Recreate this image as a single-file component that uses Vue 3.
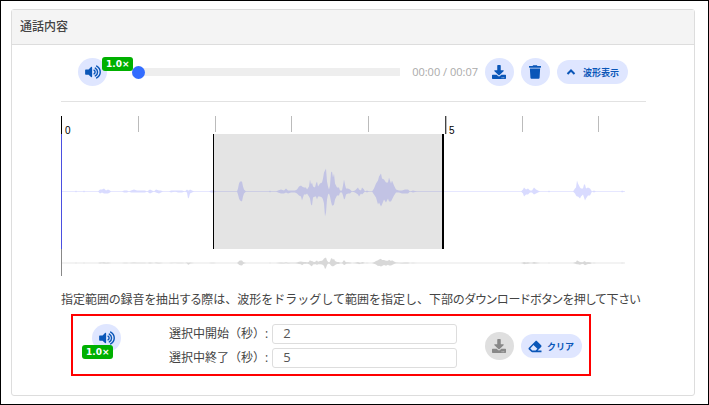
<script setup>
import { ref } from 'vue'

const position = ref(0)
const start = ref('2')
const end = ref('5')

// [x, height above the centre line, depth below it]
const samples = [
  [0, 0, 0], [14, 0, 0], [15, 1, 1], [16, 0, 0], [22, 0, 0], [23, 1, 1], [24, 0, 0],
  [37, 0, 0], [39, 2, 2], [41, 2, 1], [43, 3, 2], [45, 1, 2], [47, 2, 2], [49, 1, 1], [50, 0, 0],
  [61, 0, 0], [63, 1, 1], [66, 1, 1], [68, 0, 0], [70, 1, 1], [73, 2, 1], [76, 1, 1], [80, 1, 1], [84, 1, 1], [86, 0, 0],
  [89, 2, 2], [91, 1, 1], [93, 0, 0], [95, 2, 1], [98, 1, 2], [100, 1, 1], [102, 0, 0],
  [108, 0, 0], [110, 1, 1], [114, 1, 0], [117, 1, 1], [121, 1, 1], [124, 0, 0],
  [126, 2, 1], [127, 1, 7], [128, 1, 6], [129, 2, 2], [131, 1, 1], [133, 0, 0], [148, 0, 0], [150, 1, 1], [153, 1, 1], [155, 0, 0],
  [176, 0, 0], [177, 3, 3], [178, 8, 7], [179, 10, 9], [181, 10, 10], [182, 5, 5], [183, 2, 2], [185, 0, 0],
  [208, 0, 0], [209, 1, 1], [210, 0, 0], [215, 0, 0], [217, 1, 1], [220, 2, 2], [223, 1, 2], [225, 3, 1], [227, 1, 2],
  [230, 1, 1], [234, 1, 1], [236, 2, 2], [238, 5, 4], [240, 6, 5], [241, 5, 9], [243, 4, 3], [245, 4, 3], [246, 2, 2],
  [248, 5, 5], [249, 12, 7], [250, 7, 13], [251, 9, 14], [252, 5, 6], [254, 4, 5], [255, 8, 5], [256, 10, 8], [257, 5, 5],
  [259, 8, 5], [261, 9, 6], [262, 13, 8], [263, 19, 12], [264, 21, 25], [265, 23, 21], [266, 10, 8], [267, 5, 3], [268, 2, 2],
  [269, 6, 5], [270, 19, 10], [271, 20, 14], [272, 14, 14], [273, 18, 13], [274, 8, 8], [276, 4, 4], [278, 4, 4], [279, 1, 1],
  [281, 1, 1], [282, 6, 4], [283, 12, 8], [284, 7, 7], [285, 3, 3], [287, 3, 2], [289, 2, 2], [291, 0, 0],
  [294, 1, 1], [297, 4, 3], [298, 2, 5], [300, 1, 2], [301, 4, 3], [303, 2, 1], [304, 0, 0], [306, 1, 1], [308, 0, 0],
  [311, 0, 0], [313, 3, 3], [315, 8, 6], [317, 11, 13], [318, 15, 11], [320, 18, 15], [321, 13, 13], [323, 12, 8], [325, 9, 11],
  [327, 9, 7], [328, 14, 10], [330, 8, 10], [331, 11, 8], [333, 6, 4], [335, 2, 1], [338, 1, 1], [341, 1, 2], [344, 2, 2],
  [347, 2, 2], [349, 0, 0], [352, 1, 1], [356, 0, 0], [460, 0, 0], [462, 2, 2], [463, 4, 5], [465, 2, 3], [467, 3, 3], [469, 1, 1],
  [471, 1, 1], [473, 4, 3], [475, 2, 2], [477, 1, 1], [479, 0, 0], [487, 0, 0], [488, 1, 1], [489, 0, 0],
  [512, 0, 0], [514, 3, 2], [515, 4, 4], [516, 11, 5], [517, 8, 5], [519, 4, 7], [520, 3, 5], [522, 3, 3], [523, 7, 6],
  [524, 7, 9], [525, 3, 7], [527, 4, 4], [529, 3, 4], [531, 0, 0], [533, 1, 1], [535, 0, 0], [560, 0, 0], [561, 1, 1], [563, 0, 0]
]

// One closed shape for each stretch of sound between two silent samples
function outline(centre, gain) {
  const shapes = []
  let run = [samples[0]]
  for (const sample of samples.slice(1)) {
    run.push(sample)
    if (sample[1] === 0 && sample[2] === 0) {
      if (run.length > 2) {
        const top = run.map(([x, up]) => `${x},${centre - up * gain}`)
        const bottom = run.map(([x, , down]) => `${x},${centre + down * gain}`).reverse()
        shapes.push(`M${[...top, ...bottom].join('L')}Z`)
      }
      run = [sample]
    }
  }
  return shapes.join('')
}

const wave = outline(75.5, 1)
const overview = outline(147, 0.24)
const ticks = [77, 154, 230, 307, 461, 537]
</script>

<template>
  <main class="page">
    <svg class="defs" aria-hidden="true">
      <symbol id="volume" viewBox="0 0 576 512">
        <path d="M215 71 126 160H24c-13 0-24 11-24 24v144c0 13 11 24 24 24h102l89 89c15 15 41 4 41-17V88c0-21-26-32-41-17z" />
        <g fill="none" stroke="currentColor" stroke-width="52" stroke-linecap="round">
          <path d="M326 190c52 28 52 104 0 132" />
          <path d="M372 112c110 66 110 222 0 288" />
          <path d="M422 40c174 104 174 328 0 432" />
        </g>
      </symbol>
      <symbol id="download" viewBox="0 0 512 512">
        <path d="M216 0h80c13 0 24 11 24 24v168h88c18 0 27 21 14 34L270 378c-7 7-20 7-28 0L90 226c-12-13-3-34 15-34h87V24c0-13 11-24 24-24zm296 376v112c0 13-11 24-24 24H24c-13 0-24-11-24-24V376c0-13 11-24 24-24h147l49 49c20 20 52 20 72 0l49-49h147c13 0 24 11 24 24zM388 464c0-11-9-20-20-20s-20 9-20 20 9 20 20 20 20-9 20-20zm64 0c0-11-9-20-20-20s-20 9-20 20 9 20 20 20 20-9 20-20z" />
      </symbol>
      <symbol id="trash" viewBox="0 0 448 512">
        <path d="M432 32H312l-9-19c-4-8-12-13-22-13H167c-9 0-18 5-22 13l-9 19H16C7 32 0 39 0 48v32c0 9 7 16 16 16h416c9 0 16-7 16-16V48c0-9-7-16-16-16zM32 128l21 339c2 25 23 45 48 45h246c25 0 46-20 48-45l21-339z" />
      </symbol>
      <symbol id="chevron" viewBox="0 0 10 8">
        <path d="M1.5 6 5 2.5 8.5 6" fill="none" stroke="currentColor" stroke-width="2" />
      </symbol>
      <symbol id="eraser" viewBox="0 0 512 512">
        <path d="M498 274c19-19 19-49 0-68L338 46c-19-19-49-19-68 0L14 302c-19 19-19 49 0 68l96 96c9 9 21 14 34 14h356c7 0 12-5 12-12v-40c0-7-5-12-12-12H356zM195 195l154 154-67 67H150l-80-80z" />
      </symbol>
    </svg>

    <section class="card">
      <h1 class="card-header">通話内容</h1>
      <div class="card-body">
        <div class="player">
          <button class="round" type="button" aria-label="再生">
            <svg class="icon-volume"><use href="#volume" /></svg>
            <span class="badge badge-top">1.0×</span>
          </button>
          <input v-model="position" class="seek" type="range" min="0" max="7" aria-label="再生位置" />
          <span class="time">00:00 / 00:07</span>
          <div class="actions">
            <button class="round" type="button" aria-label="ダウンロード">
              <svg class="icon-download"><use href="#download" /></svg>
            </button>
            <button class="round" type="button" aria-label="削除">
              <svg class="icon-trash"><use href="#trash" /></svg>
            </button>
            <button class="pill" type="button">
              <svg class="icon-chevron"><use href="#chevron" /></svg>波形表示
            </button>
          </div>
        </div>

        <svg class="waveform" viewBox="0 0 585 160" role="img" aria-label="波形">
          <rect v-for="x in ticks" :key="x" :x="x" y="0" width="1" height="16" fill="#bbb" />
          <rect x="384" y="0" width="1" height="18" fill="#444" />
          <rect x="385" y="0" width="1" height="18" fill="#bbb" />
          <text class="tick-label" x="4" y="18">0</text>
          <text class="tick-label" x="388" y="18">5</text>
          <rect x="0" y="75" width="564" height="1" fill="#e6e7ff" />
          <path :d="wave" fill="#d9dbff" />
          <rect x="0" y="146" width="564" height="2" fill="#f3f3f3" />
          <path :d="overview" fill="#d8d8d8" />
          <rect x="152" y="18" width="231" height="115" fill="#000" fill-opacity="0.106" />
          <rect x="152" y="18" width="1" height="115" />
          <rect x="381" y="18" width="2" height="115" />
          <rect x="0" y="0" width="1" height="18" />
          <rect x="0" y="18" width="1" height="115" fill="#4b4fe0" />
          <rect x="0" y="133" width="1" height="27" fill="#888" />
        </svg>

        <p class="hint">
          <span class="compact">指定範囲の録音を抽出する際は</span>、波形をドラッグして範囲を指定し、<span class="compact">下部のダウンロードボタンを押して下さい</span>
        </p>

        <form class="selection" @submit.prevent>
          <button class="round" type="button" aria-label="選択範囲を再生">
            <svg class="icon-volume"><use href="#volume" /></svg>
            <span class="badge badge-bottom">1.0×</span>
          </button>
          <div class="fields">
            <label for="start">選択中開始（秒）:</label>
            <input id="start" v-model="start" type="text" />
            <label for="end">選択中終了（秒）:</label>
            <input id="end" v-model="end" type="text" />
          </div>
          <div class="actions">
            <button class="round muted" type="button" aria-label="選択範囲をダウンロード">
              <svg class="icon-download"><use href="#download" /></svg>
            </button>
            <button class="pill clear" type="button">
              <svg class="icon-eraser"><use href="#eraser" /></svg>クリア
            </button>
          </div>
        </form>
      </div>
    </section>
  </main>
</template>

<style>
body {
  margin: 0;
  background: #fff;
}
</style>

<style scoped>
* {
  box-sizing: border-box;
}

.page {
  min-height: 100vh;
  padding: 8px 13px 8px 10px;
  border: 1px solid #000;
  color: #444;
  font: 12px/20px "Open Sans", "Noto Sans CJK JP", sans-serif;
}

.defs {
  display: none;
}

.card {
  border: 1px solid #ddd;
  border-radius: 3px;
}

.card-header {
  margin: 0;
  padding: 7px 8px;
  border-bottom: 1px solid #ddd;
  background: #f4f4f4;
  color: #444;
  font-size: 12px;
  font-weight: 500;
}

.card-body {
  padding: 13px 48px 19px 49px;
}

.player {
  display: flex;
  align-items: center;
  padding: 0 18px 15px 17px;
  border-bottom: 1px solid #e2e2e2;
}

button {
  display: flex;
  align-items: center;
  justify-content: center;
  padding: 0;
  border: 0;
  background: #dfe6ff;
  color: #0a56b8;
  font-family: inherit;
}

button svg {
  fill: currentColor;
}

.round {
  position: relative;
  flex: none;
  width: 29px;
  height: 28px;
  border-radius: 50%;
}

.muted {
  background: #dfdfdf;
  color: #888;
}

.pill {
  gap: 7px;
  height: 24px;
  padding: 0 9px;
  border-radius: 12px;
  font-size: 9px;
  font-weight: 700;
  white-space: nowrap;
}

.clear {
  gap: 5px;
  padding: 0 8px 0 7px;
}

.icon-volume {
  width: 16px;
  height: 14px;
}

.icon-download {
  width: 14px;
  height: 14px;
}

.icon-trash {
  width: 12px;
  height: 14px;
}

.icon-chevron {
  width: 10px;
  height: 8px;
}

.icon-eraser {
  width: 14px;
  height: 13px;
}

.badge {
  position: absolute;
  padding: 0 4px;
  border-radius: 3px;
  background: #00b000;
  color: #fff;
  font: bold 9px/14px "DejaVu Sans", sans-serif;
}

.badge-top {
  top: -1px;
  left: 24px;
}

.badge-bottom {
  top: 21px;
  left: -10px;
}

.seek {
  flex: 1;
  min-width: 0;
  height: 14px;
  margin: 0 12px 0 25px;
  appearance: none;
  background: linear-gradient(#eee, #eee) center / 100% 8px no-repeat;
  border-radius: 4px;
}

.seek::-webkit-slider-thumb {
  width: 13px;
  height: 13px;
  appearance: none;
  border-radius: 50%;
  background: #336dff;
}

.time {
  margin-right: 7px;
  color: #aaa;
  font-size: 11px;
  white-space: nowrap;
}

.actions {
  display: flex;
  align-items: center;
  gap: 7px;
}

.waveform {
  display: block;
  width: 100%;
  margin-top: 14px;
}

.tick-label {
  fill: #000;
  font: 10px "Liberation Sans", sans-serif;
}

.hint {
  margin: 14px 0 4px;
}

.compact {
  font-feature-settings: "palt";
}

.selection {
  display: flex;
  align-items: center;
  margin: 0 55px 0 10px;
  padding: 8px 7px 6px 19px;
  border: 2px solid #f00;
}

.selection > .round {
  align-self: flex-start;
}

.fields {
  display: grid;
  flex: 1;
  grid-template-columns: auto 1fr;
  align-items: center;
  gap: 4px;
  margin: 0 28px 0 48px;
}

.fields input {
  width: 100%;
  min-width: 0;
  height: 20px;
  padding: 0 10px 2px;
  border: 1px solid #ddd;
  border-radius: 3px;
  background: #fff;
  color: #555;
  font: 13px "Open Sans", sans-serif;
}
</style>
